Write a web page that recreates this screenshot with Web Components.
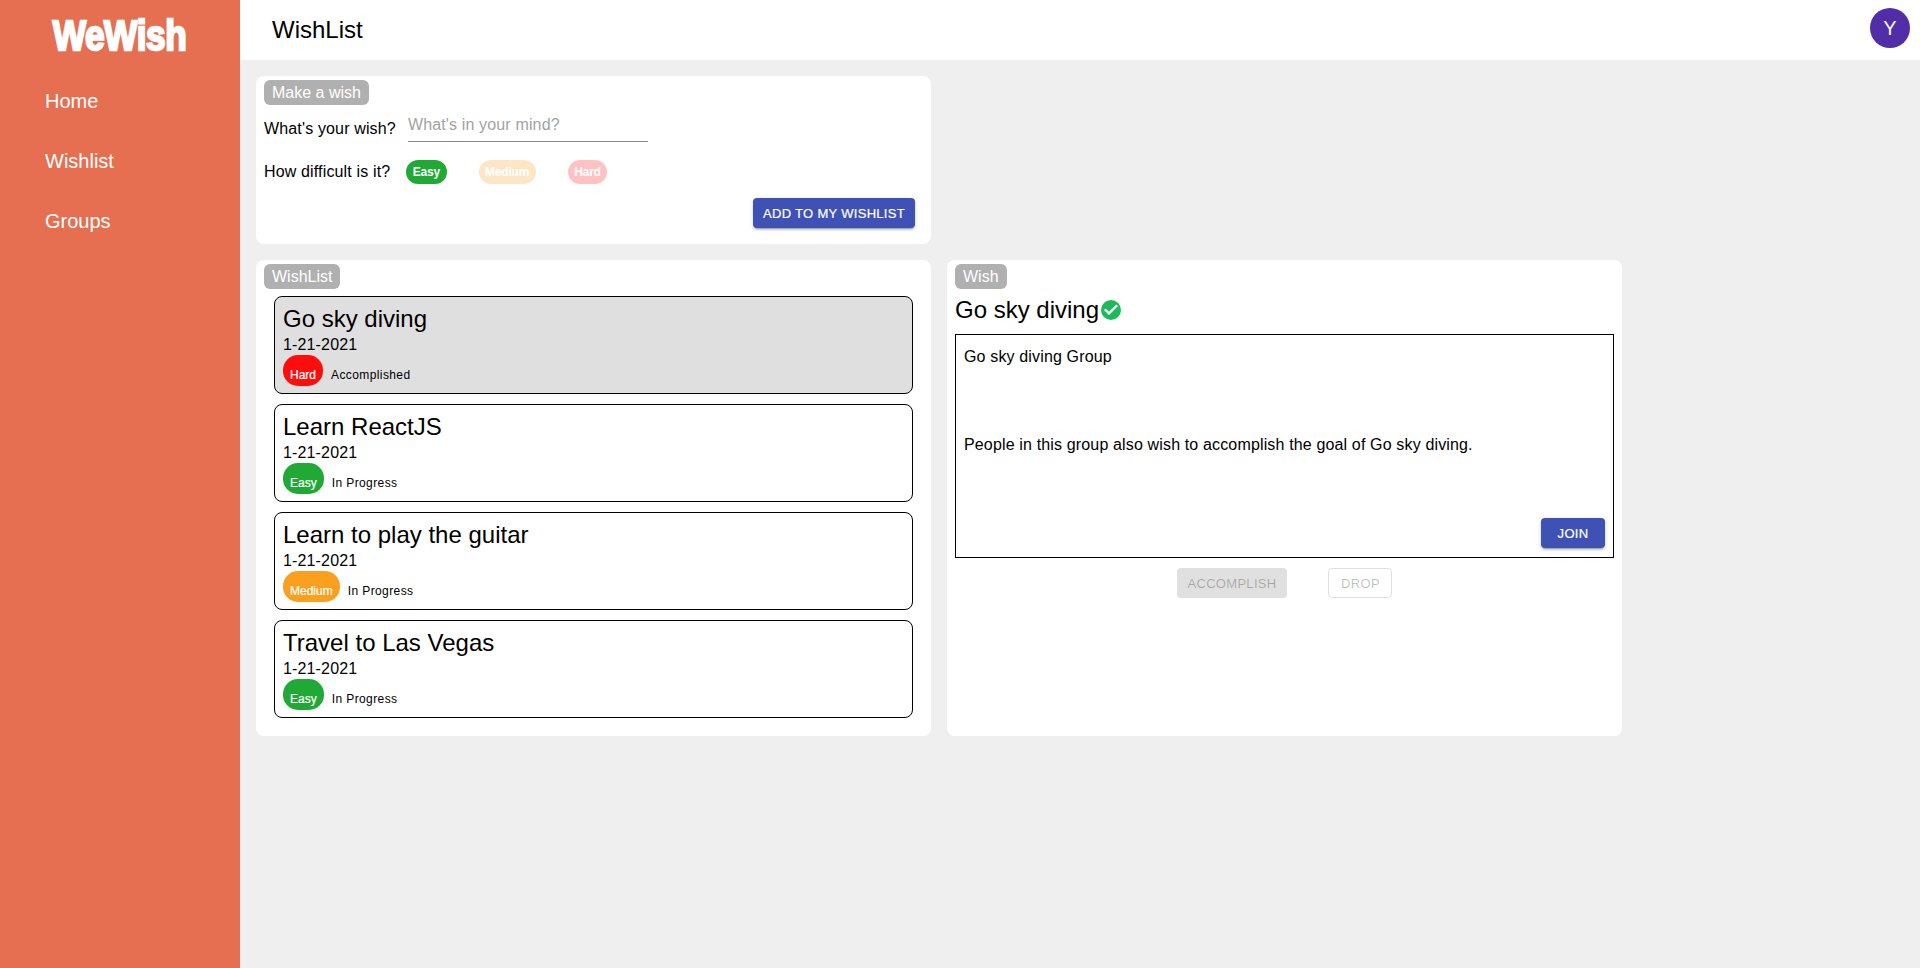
<!DOCTYPE html>
<html lang="en">
<head>
<meta charset="utf-8">
<title>WeWish</title>
<style>
    html, body { margin: 0; height: 100%; }
    body { font-family: "Liberation Sans", Arial, sans-serif; color: #000; background: #efefef; }
</style>
</head>
<body>
<wish-app></wish-app>

<script>
class WeSidebar extends HTMLElement {
    constructor() {
        super();
        this.attachShadow({mode: "open"}).innerHTML = `
            <style>
                :host { display: block; width: 240px; flex: none; background: #e76f51; color: #fff; }
                .logo { height: 71px; display: flex; justify-content: center; align-items: center; }
                .logo span {
                    font: bold 43px "Liberation Sans", Arial, sans-serif;
                    letter-spacing: -.5px;
                    -webkit-text-stroke: 2.4px #fff;
                    transform: scaleX(.82);
                }
                nav { display: flex; flex-direction: column; padding-left: 45px; }
                a { height: 60px; line-height: 60px; font-size: 20px; color: #fff; text-decoration: none; }
            </style>
            <div class="logo"><span>WeWish</span></div>
            <nav>
                <a href="#">Home</a>
                <a href="#">Wishlist</a>
                <a href="#">Groups</a>
            </nav>`;
    }
}

class WeHeader extends HTMLElement {
    constructor() {
        super();
        this.attachShadow({mode: "open"}).innerHTML = `
            <style>
                :host {
                    display: flex; align-items: center; justify-content: space-between;
                    height: 60px; background: #fff; padding: 0 10px 0 32px;
                }
                h1 { margin: 0; font-size: 24px; font-weight: 400; }
                .avatar {
                    width: 40px; height: 40px; border-radius: 50%; margin-top: -4px;
                    background: #512da8; color: #fafafa; font-size: 20px;
                    display: flex; align-items: center; justify-content: center;
                }
            </style>
            <h1><slot></slot></h1>
            <div class="avatar">Y</div>`;
    }
}

class WeCard extends HTMLElement {
    constructor() {
        super();
        this.attachShadow({mode: "open"}).innerHTML = `
            <style>
                :host { display: block; background: #fff; border-radius: 8px; padding: 4px 8px; box-sizing: border-box; }
                .label {
                    display: inline-block; height: 25px; line-height: 25px; padding: 0 8px;
                    background: #b0b0b0; color: #fff; font-size: 16px; border-radius: 6px;
                    vertical-align: top;
                }
            </style>
            <div class="label">${this.getAttribute("label")}</div>
            <slot></slot>`;
    }
}

class DiffChip extends HTMLElement {
    constructor() {
        super();
        this.attachShadow({mode: "open"}).innerHTML = `
            <style>
                :host {
                    display: inline-flex; align-items: center; justify-content: center; flex: none;
                    height: 24px; padding: 0 6.5px; box-sizing: border-box;
                    border-radius: 12px; color: #fff; font-size: 12px;
                    font-weight: bold; letter-spacing: -.2px;
                }
                :host([level="easy"]) { background: #21a936; }
                :host([level="medium"]) { background: #fba01e; }
                :host([level="hard"]) { background: #ff0d0d; }
                :host([faded]) { opacity: .25; }
                :host([tall]) {
                    height: 31px; border-radius: 15px; padding: 8px 7px 0;
                    font-weight: 400; letter-spacing: 0; -webkit-text-stroke: .2px #fff;
                }
            </style>
            <slot></slot>`;
    }
}

class WeButton extends HTMLElement {
    constructor() {
        super();
        this.attachShadow({mode: "open"}).innerHTML = `
            <style>
                :host {
                    display: inline-flex; align-items: center; justify-content: center; flex: none;
                    height: 30px; min-width: 64px; padding: 0 10px; box-sizing: border-box; border-radius: 4px;
                    font-size: 13px; text-transform: uppercase; letter-spacing: .3px;
                }
                :host([variant="primary"]) {
                    background: #3f51b5; color: #fff; -webkit-text-stroke: .2px #fff;
                    box-shadow: 0 3px 1px -2px rgba(0,0,0,.2), 0 2px 2px rgba(0,0,0,.14), 0 1px 5px rgba(0,0,0,.12);
                }
                :host([variant="disabled"]) { background: #e0e0e0; color: rgba(0,0,0,.26); padding: 0 11px; }
                :host([variant="outlined"]) { border: 1px solid rgba(0,0,0,.12); color: rgba(0,0,0,.26); }
            </style>
            <slot></slot>`;
    }
}

class WishForm extends HTMLElement {
    constructor() {
        super();
        this.attachShadow({mode: "open"}).innerHTML = `
            <style>
                :host { display: block; font-size: 16px; letter-spacing: .15px; }
                .wish { display: flex; height: 36px; margin-top: 6px; }
                .wish label { padding-top: 9px; margin-right: 12px; }
                .input {
                    width: 240px; height: 31px; box-sizing: border-box; line-height: 28px;
                    border-bottom: 1px solid #8c8c8c; color: #a2a2a2;
                }
                .level { display: flex; align-items: center; height: 24px; margin-top: 13px; }
                .level label { margin-right: 16px; }
                .chips { display: flex; gap: 32px; }
                .actions { display: flex; justify-content: flex-end; margin: 14px 8px 0 0; letter-spacing: 0; }
            </style>
            <div class="wish">
                <label>What's your wish?</label>
                <div class="input">What's in your mind?</div>
            </div>
            <div class="level">
                <label>How difficult is it?</label>
                <div class="chips">
                    <diff-chip level="easy">Easy</diff-chip>
                    <diff-chip level="medium" faded>Medium</diff-chip>
                    <diff-chip level="hard" faded>Hard</diff-chip>
                </div>
            </div>
            <div class="actions"><we-button variant="primary">Add to my wishlist</we-button></div>`;
    }
}

class WishItem extends HTMLElement {
    constructor() {
        super();
        const level = this.getAttribute("level");
        this.attachShadow({mode: "open"}).innerHTML = `
            <style>
                :host {
                    display: block; height: 98px; box-sizing: border-box; padding: 8px 8px 0;
                    border: 1px solid #000; border-radius: 8px; background: #fff;
                }
                :host([selected]) { background: #dfdfdf; }
                .title { font-size: 24px; line-height: 28px; }
                .date { font-size: 16px; line-height: 18px; margin-top: 3px; letter-spacing: .15px; }
                .row { display: flex; align-items: flex-end; margin-top: 1px; }
                .status { font-size: 12px; margin: 0 0 4px 8px; letter-spacing: .4px; }
            </style>
            <div class="title"><slot></slot></div>
            <div class="date">${this.getAttribute("date")}</div>
            <div class="row">
                <diff-chip level="${level}" tall>${level[0].toUpperCase() + level.slice(1)}</diff-chip>
                <span class="status">${this.getAttribute("status")}</span>
            </div>`;
    }
}

class WishDetail extends HTMLElement {
    constructor() {
        super();
        this.attachShadow({mode: "open"}).innerHTML = `
            <style>
                :host { display: block; }
                h2 { display: flex; align-items: center; margin: 2px 0 0; height: 38px; font-size: 24px; font-weight: 400; }
                svg { width: 24px; height: 24px; flex: none; }
                .group {
                    height: 224px; margin-top: 5px; padding: 7px 8px 8px; box-sizing: border-box;
                    border: 1px solid #000; font-size: 16px; letter-spacing: .15px;
                    display: flex; flex-direction: column;
                }
                .group p { margin: 0; line-height: 30px; }
                .group p + p { margin-top: 58px; }
                .join { margin-top: auto; align-self: flex-end; margin-bottom: 1px; letter-spacing: .3px; }
                .actions { display: flex; justify-content: center; gap: 41px; margin-top: 10px; }
            </style>
            <h2>Go sky diving<svg viewBox="0 0 24 24" aria-hidden="true">
                    <path fill="#1dba5c" d="M12 2a10 10 0 1 0 0 20 10 10 0 0 0 0-20z"/>
                    <path fill="#fff" d="M10 17l-5-5 1.6-1.6 3.4 3.4 7.4-7.4L19 8z"/>
                </svg></h2>
            <div class="group">
                <p>Go sky diving Group</p>
                <p>People in this group also wish to accomplish the goal of Go sky diving.</p>
                <we-button class="join" variant="primary">Join</we-button>
            </div>
            <div class="actions">
                <we-button variant="disabled">Accomplish</we-button>
                <we-button variant="outlined">Drop</we-button>
            </div>`;
    }
}

class WishApp extends HTMLElement {
    constructor() {
        super();
        this.attachShadow({mode: "open"}).innerHTML = `
            <style>
                :host { display: flex; min-height: 968px; }
                .main { flex: 1; display: flex; flex-direction: column; }
                .content {
                    display: grid; grid-template-columns: 675px 675px; grid-template-rows: 168px 476px;
                    gap: 16px 16px; padding: 16px;
                }
                .list { display: flex; flex-direction: column; gap: 10px; margin: 7px 10px 0; }
            </style>
            <we-sidebar></we-sidebar>
            <div class="main">
                <we-header>WishList</we-header>
                <div class="content">
                    <we-card label="Make a wish" style="grid-column: 1"><wish-form></wish-form></we-card>
                    <div></div>
                    <we-card label="WishList">
                        <div class="list">
                            <wish-item level="hard" date="1-21-2021" status="Accomplished" selected>Go sky diving</wish-item>
                            <wish-item level="easy" date="1-21-2021" status="In Progress">Learn ReactJS</wish-item>
                            <wish-item level="medium" date="1-21-2021" status="In Progress">Learn to play the guitar</wish-item>
                            <wish-item level="easy" date="1-21-2021" status="In Progress">Travel to Las Vegas</wish-item>
                        </div>
                    </we-card>
                    <we-card label="Wish"><wish-detail></wish-detail></we-card>
                </div>
            </div>`;
    }
}

customElements.define("we-sidebar", WeSidebar);
customElements.define("we-header", WeHeader);
customElements.define("we-card", WeCard);
customElements.define("diff-chip", DiffChip);
customElements.define("we-button", WeButton);
customElements.define("wish-form", WishForm);
customElements.define("wish-item", WishItem);
customElements.define("wish-detail", WishDetail);
customElements.define("wish-app", WishApp);
</script>
</body>
</html>
